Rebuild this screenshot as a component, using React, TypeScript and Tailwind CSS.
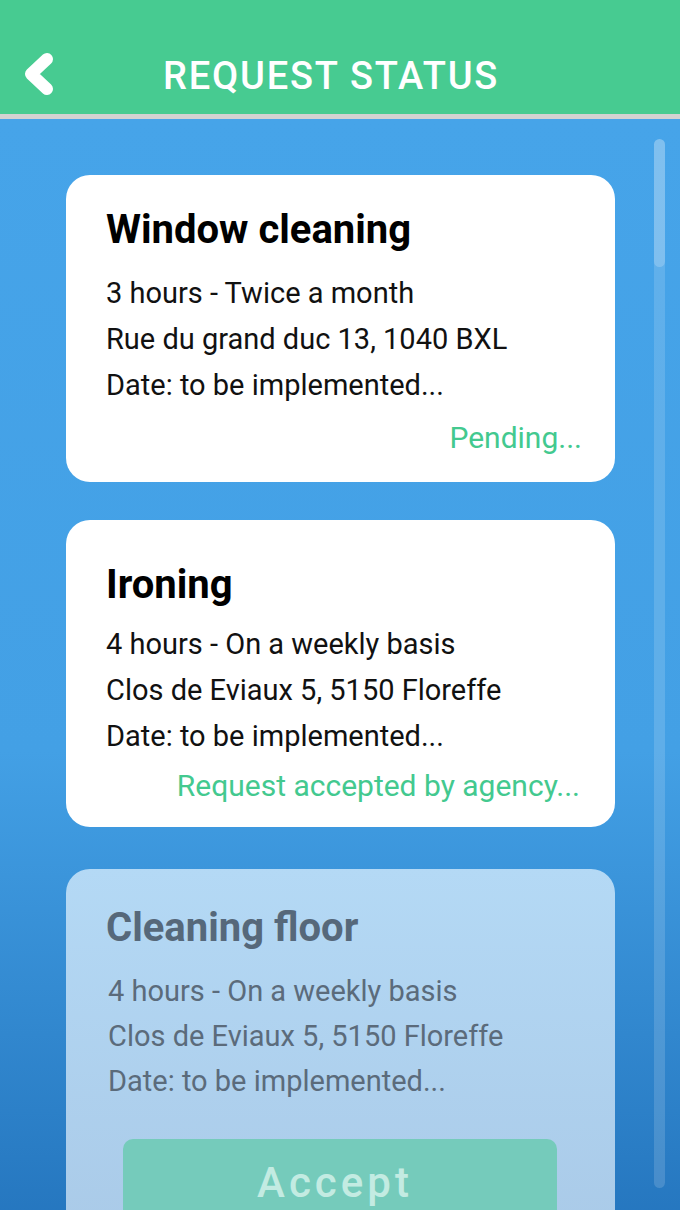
import React from "react";

const font = { fontFamily: "Roboto, 'Noto Sans', sans-serif" };

function Line({ children, cls }: { children: React.ReactNode; cls?: string }) {
  return <div className={cls}>{children}</div>;
}

export default function App() {
  return (
    <div className="relative w-[680px] h-[1210px] overflow-hidden flex flex-col" style={font}>
      <header className="h-[119px] shrink-0 bg-[#47cb91] border-b-[5px] border-[#d2d2d2] flex items-start">
        <svg className="ml-[24px] mt-[52px]" width="30" height="44" viewBox="0 0 30 44">
          <path d="M23 7 L7 22 L23 37" fill="none" stroke="#ffffff" strokeWidth="12" strokeLinecap="round" strokeLinejoin="round" />
        </svg>
        <h1 className="ml-[109px] mt-[57px] text-[38px] leading-[38px] font-medium tracking-[1.8px] text-white">
          REQUEST STATUS
        </h1>
      </header>

      <main className="flex-1 bg-[linear-gradient(to_bottom,#46a4e9_0%,#43a0e5_55%,#2272bb_100%)] flex flex-col pl-[66px] pr-[65px] pt-[56px]">
        <section className="h-[307px] bg-white rounded-[24px] pl-[40px] pr-[33px] pt-[31px] flex flex-col">
          <h2 className="text-[40px] leading-[48px] font-bold text-black">Window cleaning</h2>
          <div className="mt-[16px] text-[29px] leading-[46px] text-[#111]">
            <Line>3 hours - Twice a month</Line>
            <Line>Rue du grand duc 13, 1040 BXL</Line>
            <Line>Date: to be implemented...</Line>
          </div>
          <div className="mt-[12px] text-right text-[30px] leading-[36px] text-[#43c98f]">Pending...</div>
        </section>

        <section className="mt-[38px] h-[307px] bg-white rounded-[24px] pl-[40px] pr-[35px] pt-[41px] flex flex-col">
          <h2 className="text-[40px] leading-[48px] font-bold text-black">Ironing</h2>
          <div className="mt-[12px] text-[29px] leading-[46px] text-[#111]">
            <Line>4 hours - On a weekly basis</Line>
            <Line>Clos de Eviaux 5, 5150 Floreffe</Line>
            <Line>Date: to be implemented...</Line>
          </div>
          <div className="mt-[9px] text-right text-[30px] leading-[36px] text-[#43c98f]">
            Request accepted by agency...
          </div>
        </section>

        <section className="mt-[42px] h-[400px] bg-[linear-gradient(to_bottom,#b4d9f5,#a9c9e7)] rounded-t-[24px] pl-[40px] pt-[35px] flex flex-col">
          <h2 className="text-[40px] leading-[48px] font-bold text-[#56687a]">Cleaning floor</h2>
          <div className="ml-[2px] mt-[17px] text-[29px] leading-[45px] text-[#5b6b7b]">
            <Line>4 hours - On a weekly basis</Line>
            <Line>Clos de Eviaux 5, 5150 Floreffe</Line>
            <Line>Date: to be implemented...</Line>
          </div>
          <div className="ml-[17px] mt-[35px] w-[434px] h-[120px] rounded-[10px] bg-[#75cbbb] flex justify-center">
            <span className="mt-[20px] mr-[10px] text-[42px] leading-[48px] font-medium tracking-[4px] text-[#c3ebe2]">Accept</span>
          </div>
        </section>
      </main>

      <div className="absolute left-[654px] top-[139px] w-[11px] h-[1049px] rounded-full bg-white/15">
        <div className="h-[128px] rounded-full bg-white/20" />
      </div>
    </div>
  );
}
